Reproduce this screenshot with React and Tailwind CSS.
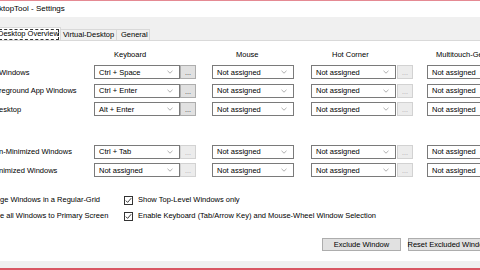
import React from 'react';

const Chevron = () => (
  <svg width="6" height="4" viewBox="0 0 6 4" className="shrink-0">
    <polyline points="0.5,0.8 3,3.2 5.5,0.8" fill="none" stroke="#9a9a9a" strokeWidth="0.8" />
  </svg>
);

const Combo = ({ value, width, chevron = true }) => (
  <div className={`${width} h-[14px] bg-white border border-[#7a7a7a] flex items-center justify-between pl-[4px] pr-[6px] shrink-0`}>
    <span className="leading-none text-black whitespace-nowrap">{value}</span>
    {chevron && <Chevron />}
  </div>
);

const DotsButton = ({ disabled }) => (
  <div
    className={`w-[16px] h-[14px] shrink-0 border flex items-end justify-center pb-[2px] ${
      disabled ? 'bg-[#ececec] border-[#d2d2d2] text-[#a8a8a8]' : 'bg-[#e1e1e1] border-[#adadad] text-[#333]'
    }`}
  >
    <span className="leading-none text-[7px]">...</span>
  </div>
);

const rows = [
  { label: 'Windows', kb: 'Ctrl + Space', kbOff: false },
  { label: 'reground App Windows', kb: 'Ctrl + Enter', kbOff: false },
  { label: 'esktop', kb: 'Alt + Enter', kbOff: false },
  { label: 'n-Minimized Windows', kb: 'Ctrl + Tab', kbOff: true, gap: true },
  { label: 'nimized Windows', kb: 'Not assigned', kbOff: true },
];

const Row = ({ row }) => (
  <div className={`h-[18.5px] flex items-center ${row.gap ? 'mt-[24px]' : ''}`}>
    <div className="w-[95px] shrink-0 -ml-[1px] whitespace-nowrap overflow-hidden">{row.label}</div>
    <Combo value={row.kb} width="w-[86px]" />
    <DotsButton disabled={row.kbOff} />
    <div className="w-[16px] shrink-0" />
    <Combo value="Not assigned" width="w-[82px]" />
    <div className="w-[17px] shrink-0" />
    <Combo value="Not assigned" width="w-[85px]" />
    <div className="w-[1px] shrink-0" />
    <DotsButton disabled />
    <div className="w-[14px] shrink-0" />
    <Combo value="Not assigned" width="w-[84px]" chevron={false} />
  </div>
);

const Check = ({ label }) => (
  <div className="flex items-center">
    <div className="w-[9px] h-[9px] border border-[#333] bg-white flex items-center justify-center shrink-0">
      <svg width="7" height="7" viewBox="0 0 7 7">
        <polyline points="0.8,3.6 2.6,5.4 6.2,1.2" fill="none" stroke="#222" strokeWidth="0.9" />
      </svg>
    </div>
    <span className="ml-[5px] whitespace-nowrap">{label}</span>
  </div>
);

export default function App() {
  return (
    <div className="w-[480px] h-[270px] overflow-hidden flex flex-col bg-white text-[7.5px] text-black font-['Liberation_Sans',Arial,sans-serif]">
      <div className="h-[1px] bg-[#e58a93] shrink-0" />
      <div className="h-[16px] shrink-0 flex items-center">
        <span className="-ml-[1px] text-[8px] whitespace-nowrap">ktopTool - Settings</span>
      </div>

      {/* tab strip */}
      <div className="h-[23px] shrink-0 bg-[#f0f0f0] flex items-end">
        <div className="h-[13px] w-[62px] -ml-[1px] bg-white border-t border-r border-[#d9d9d9] flex items-center">
          <div className="h-[11px] w-[60px] border border-dashed border-[#333] flex items-center">
            <span className="-ml-[2px] whitespace-nowrap">Desktop Overview</span>
          </div>
        </div>
        <div className="h-[11px] w-[56px] bg-[#f0f0f0] border-t border-r border-[#d9d9d9] flex items-center pl-[2px]">
          <span className="whitespace-nowrap">Virtual-Desktop</span>
        </div>
        <div className="h-[11px] w-[33px] bg-[#f0f0f0] border-t border-r border-[#d9d9d9] flex items-center pl-[4px]">
          <span className="whitespace-nowrap">General</span>
        </div>
      </div>

      {/* tab page */}
      <div className="flex-1 flex flex-col border-t border-[#d9d9d9] pt-[9px]">
        <div className="h-[10px] flex items-center whitespace-nowrap">
          <span className="ml-[114px] w-[122px] shrink-0">Keyboard</span>
          <span className="w-[96px] shrink-0">Mouse</span>
          <span className="w-[104px] shrink-0">Hot Corner</span>
          <span className="shrink-0">Multitouch-Gestures</span>
        </div>

        <div className="mt-[3px] flex flex-col">
          {rows.map((r, i) => (
            <Row key={i} row={r} />
          ))}
        </div>

        <div className="mt-[12.5px] flex flex-col">
          <div className="h-[16px] flex items-center">
            <span className="w-[124px] shrink-0 whitespace-nowrap">ge Windows in a Regular-Grid</span>
            <Check label="Show Top-Level Windows only" />
          </div>
          <div className="h-[16px] flex items-center">
            <span className="w-[124px] shrink-0 whitespace-nowrap">e all Windows to Primary Screen</span>
            <Check label="Enable Keyboard (Tab/Arrow Key) and Mouse-Wheel Window Selection" />
          </div>
        </div>

        <div className="mt-[14px] flex">
          <div className="ml-[322px] w-[79px] h-[13px] shrink-0 bg-[#e1e1e1] border border-[#adadad] flex items-center justify-center whitespace-nowrap">
            Exclude Window
          </div>
          <div className="ml-[7px] w-[84px] h-[13px] shrink-0 bg-[#e1e1e1] border border-[#adadad] flex items-center justify-center whitespace-nowrap">
            Reset Excluded Windows
          </div>
        </div>
      </div>

      <div className="h-[7px] shrink-0 bg-[#f0f0f0]" />
      <div className="h-[2px] shrink-0 bg-[#d95763]" />
    </div>
  );
}
